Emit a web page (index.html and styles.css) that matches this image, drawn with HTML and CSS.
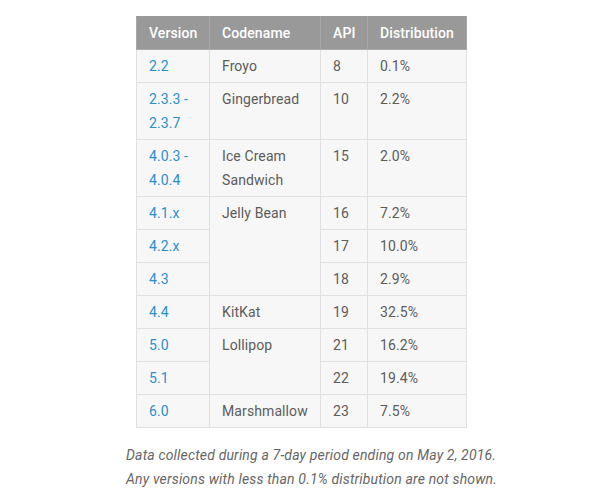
FILE: index.html
```html
<!DOCTYPE html>
<html>
<head>
<meta charset="utf-8">
<link rel="stylesheet" href="styles.css">
</head>
<body>
<div class="wrap">
  <table class="dist">
    <colgroup>
      <col class="c-ver"><col class="c-code"><col class="c-api"><col class="c-dist">
    </colgroup>
    <thead>
      <tr><th>Version</th><th>Codename</th><th>API</th><th>Distribution</th></tr>
    </thead>
    <tbody>
      <tr><td><a class="ver">2.2</a></td><td>Froyo</td><td>8</td><td>0.1%</td></tr>
      <tr><td><a class="ver">2.3.3 -<br>2.3.7</a></td><td>Gingerbread</td><td>10</td><td>2.2%</td></tr>
      <tr><td><a class="ver">4.0.3 -<br>4.0.4</a></td><td>Ice Cream<br>Sandwich</td><td>15</td><td>2.0%</td></tr>
      <tr><td><a class="ver">4.1.x</a></td><td rowspan="3">Jelly Bean</td><td>16</td><td>7.2%</td></tr>
      <tr><td><a class="ver">4.2.x</a></td><td>17</td><td>10.0%</td></tr>
      <tr><td><a class="ver">4.3</a></td><td>18</td><td>2.9%</td></tr>
      <tr><td><a class="ver">4.4</a></td><td>KitKat</td><td>19</td><td>32.5%</td></tr>
      <tr><td><a class="ver">5.0</a></td><td rowspan="2">Lollipop</td><td>21</td><td>16.2%</td></tr>
      <tr><td><a class="ver">5.1</a></td><td>22</td><td>19.4%</td></tr>
      <tr><td><a class="ver">6.0</a></td><td>Marshmallow</td><td>23</td><td>7.5%</td></tr>
    </tbody>
  </table>
  <p class="note">Data collected during a 7-day period ending on May 2, 2016.<br>Any versions with less than 0.1% distribution are not shown.</p>
</div>
</body>
</html>
```
FILE: styles.css
```css
html, body {
  margin: 0;
  padding: 0;
  background: #fff;
}
body {
  font-family: Roboto, "Noto Sans", sans-serif;
  font-size: 14px;
  color: #5c5c5c;
}
.wrap {
  padding: 16px 0 0 126px;
}
.dist {
  margin-left: 10px;
  border-collapse: collapse;
  table-layout: fixed;
  width: 331px;
  background: #f7f7f7;
}
.c-ver { width: 73px; }
.c-code { width: 111px; }
.c-api { width: 47px; }
.c-dist { width: 99px; }
.dist th,
.dist td {
  border: 1px solid #e0e0e0;
  padding: 4px 12px;
  line-height: 24px;
  text-align: left;
  vertical-align: top;
  letter-spacing: 0.1px;
}
.dist th {
  background: #999;
  color: #fff;
  font-weight: 500;
  border-color: #a9a9a9;
  border-top-color: #999;
}
.ver {
  color: #2a8fcf;
  text-decoration: none;
}
.note {
  margin: 15px 0 0 0;
  font-style: italic;
  color: #666;
  line-height: 24px;
  letter-spacing: 0.17px;
}
```
